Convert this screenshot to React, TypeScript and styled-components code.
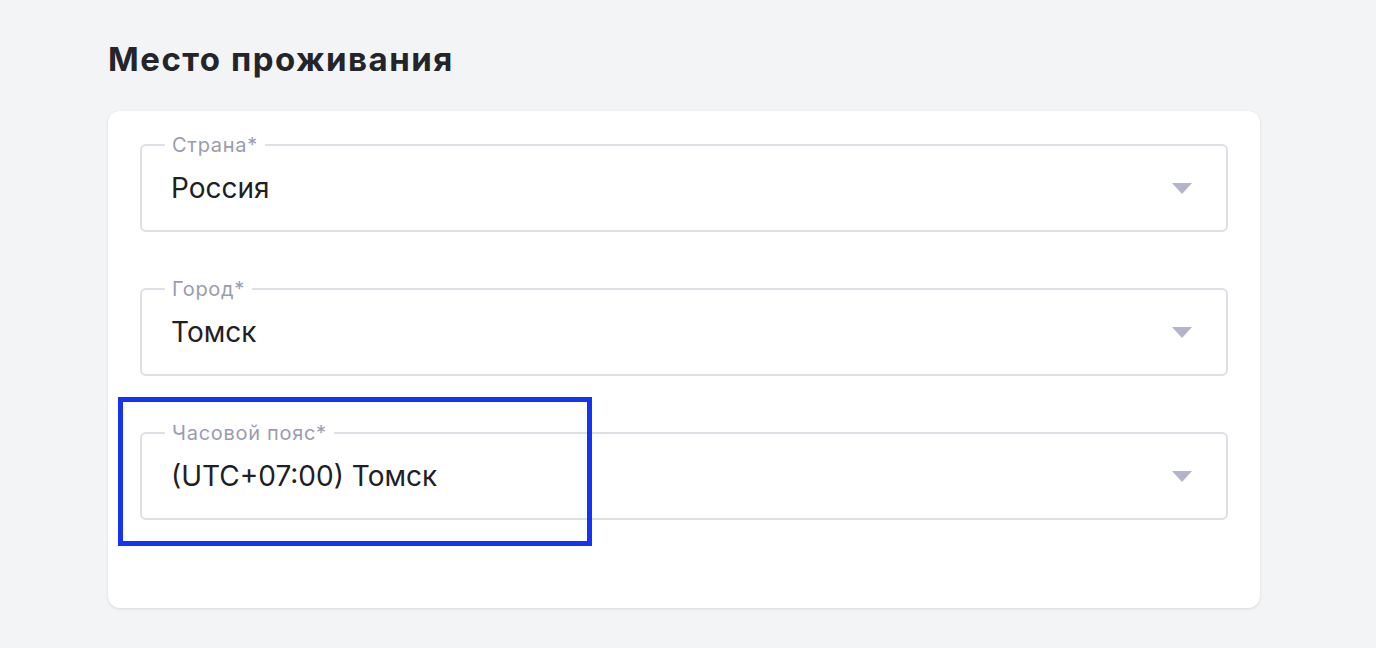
import React from 'react';
import styled, { createGlobalStyle } from 'styled-components';

const GlobalStyle = createGlobalStyle`
  html, body {
    margin: 0;
    padding: 0;
    background: #f3f4f6;
    font-family: Inter, "Noto Sans", Arial, sans-serif;
  }
`;

const Page = styled.div`
  padding: 39px 116px 40px 108px;
  min-height: 648px;
  box-sizing: border-box;
`;

const Title = styled.h2`
  margin: 0 0 32px;
  font-size: 33px;
  line-height: 40px;
  font-weight: 700;
  color: #24252b;
  letter-spacing: 1.5px;
`;

const Card = styled.div`
  background: #fff;
  border-radius: 12px;
  box-shadow: 0 1px 3px rgba(20, 24, 40, 0.12);
  padding: 23px 32px 88px;
  display: flex;
  flex-direction: column;
  gap: 46px;
`;

const FieldWrap = styled.div`
  position: relative;
`;

const Fieldset = styled.fieldset`
  margin: 0;
  height: 98px;
  box-sizing: border-box;
  border: 2px solid #dde0e5;
  border-radius: 6px;
  padding: 0 34px 0 29px;
  display: flex;
  align-items: center;
  justify-content: space-between;
`;

const Legend = styled.legend`
  margin-left: -6px;
  padding: 0 7px;
  font-size: 20px;
  line-height: 22px;
  letter-spacing: 0.7px;
  color: #9b9cb0;
`;

const Value = styled.span`
  font-size: 28px;
  line-height: 34px;
  color: #1f2024;
  margin-top: -10px;
`;

const Arrow = styled.svg`
  width: 20px;
  height: 11px;
  margin-top: -10px;
  flex: none;
`;

const Highlight = styled.div`
  position: absolute;
  left: -22px;
  top: -25px;
  width: 474px;
  height: 149px;
  box-sizing: border-box;
  border: 5px solid #1433f2;
  pointer-events: none;
`;

type FieldProps = { label: string; value: string; highlighted?: boolean };

function SelectField({ label, value, highlighted }: FieldProps) {
  return (
    <FieldWrap>
      <Fieldset>
        <Legend>{label}</Legend>
        <Value>{value}</Value>
        <Arrow viewBox="0 0 20 11">
          <path d="M0 0 L20 0 L10 11 Z" fill="#b3b4cc" />
        </Arrow>
      </Fieldset>
      {highlighted && <Highlight />}
    </FieldWrap>
  );
}

export default function App() {
  return (
    <Page>
      <GlobalStyle />
      <Title>Место проживания</Title>
      <Card>
        <SelectField label="Страна*" value="Россия" />
        <SelectField label="Город*" value="Томск" />
        <SelectField label="Часовой пояс*" value="(UTC+07:00) Томск" highlighted />
      </Card>
    </Page>
  );
}
